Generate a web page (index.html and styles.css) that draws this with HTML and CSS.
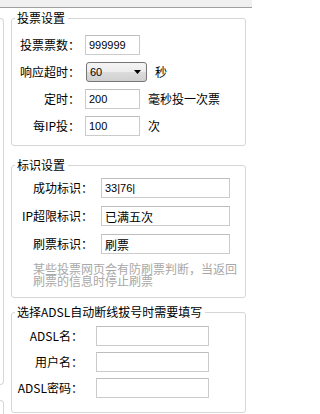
FILE: index.html
```html
<!DOCTYPE html>
<html lang="zh-CN">
<head>
<meta charset="utf-8">
<title>投票设置</title>
<link rel="stylesheet" href="styles.css">
</head>
<body>
<div class="topbar"></div>
<div class="main">
  <div class="side">
    <div class="side-a"></div>
    <div class="side-b"></div>
  </div>
  <div class="groups">
    <fieldset class="group g1">
      <legend>投票设置</legend>
      <div class="form f1">
        <label class="lbl">投票票数：</label>
        <input class="txt" type="text" value="999999">
        <span></span>

        <label class="lbl">响应超时：</label>
        <div class="select"><span class="sel-val">60</span><svg class="arrow" width="7" height="4" viewBox="0 0 7 4"><path d="M0 0H7L3.5 4Z" fill="#000"/></svg></div>
        <span class="unit unit-sel">秒</span>

        <label class="lbl">定时：</label>
        <input class="txt" type="text" value="200">
        <span class="unit">毫秒投一次票</span>

        <label class="lbl">每IP投：</label>
        <input class="txt" type="text" value="100">
        <span class="unit">次</span>
      </div>
    </fieldset>

    <fieldset class="group g2">
      <legend>标识设置</legend>
      <div class="form f2">
        <label class="lbl">成功标识：</label>
        <input class="txt" type="text" value="33|76|">
        <label class="lbl">IP超限标识：</label>
        <input class="txt cjk" type="text" value="已满五次">
        <label class="lbl">刷票标识：</label>
        <input class="txt cjk" type="text" value="刷票">
      </div>
      <p class="hint">某些投票网页会有防刷票判断，当返回刷票的信息时停止刷票</p>
    </fieldset>

    <fieldset class="group g3">
      <legend>选择ADSL自动断线拔号时需要填写</legend>
      <div class="form f3">
        <label class="lbl">ADSL名：</label>
        <input class="txt" type="text" value="">
        <label class="lbl">用户名：</label>
        <input class="txt" type="text" value="">
        <label class="lbl">ADSL密码：</label>
        <input class="txt" type="text" value="">
      </div>
    </fieldset>
  </div>
</div>
</body>
</html>
```

FILE: styles.css
```css
html, body {
  margin: 0;
  padding: 0;
  background: #ffffff;
  overflow: hidden;
}
body {
  width: 252px;
  height: 414px;
  font-family: "Noto Sans CJK SC", "Liberation Sans", sans-serif;
  font-size: 12px;
  color: #000;
}
.topbar {
  height: 7px;
  background: #f0f0f0;
  border-bottom: 1px solid #a0a0a0;
}
.main {
  display: flex;
  height: 406px;
  overflow: hidden;
}
.side {
  width: 4px;
  flex: none;
  display: flex;
  flex-direction: column;
}
.side-a {
  box-sizing: border-box;
  margin-top: 10px;
  height: 367px;
  border: 1px solid #d6d6d6;
  border-left: none;
  border-radius: 0 4px 4px 0;
}
.side-b {
  box-sizing: border-box;
  margin-top: 15px;
  height: 14px;
  border: 1px solid #d6d6d6;
  border-left: none;
  border-bottom: none;
  border-radius: 0 4px 0 0;
}
.groups {
  flex: 1;
  margin: 0 6px 0 7px;
  display: flex;
  flex-direction: column;
}
.group {
  margin: 0;
  padding: 0;
  min-width: 0;
  border: 1px solid #d6d6d6;
  border-radius: 3px;
}
.group legend {
  font-size: 12px;
  line-height: 14px;
  height: 14px;
  padding: 0 3px 0 2px;
  margin-left: 3px;
  white-space: nowrap;
}
.g1 {
  margin-top: 3px;
  padding: 10px 0 9px;
}
.g2 {
  margin-top: 12px;
  padding: 6px 0 10px;
}
.g3 {
  margin-top: 7px;
  padding: 7px 0 14px;
}
.form {
  display: grid;
  align-items: center;
}
.f1 {
  grid-template-columns: 68px 55px auto;
  column-gap: 5px;
  row-gap: 7px;
}
.f2 {
  grid-template-columns: 81px 129px;
  column-gap: 8px;
  row-gap: 8px;
}
.f3 {
  grid-template-columns: 71px 113px;
  column-gap: 13px;
  row-gap: 6px;
}
.lbl {
  text-align: right;
  white-space: nowrap;
  line-height: 14px;
}
.txt {
  box-sizing: border-box;
  width: 100%;
  height: 20px;
  margin: 0;
  padding: 0 0 0 3px;
  border: 1px solid #cbcbcb;
  border-top-color: #bdbdbd;
  background: #fff;
  font-family: "Liberation Sans", Arial, sans-serif;
  font-size: 11px;
  color: #000;
  outline: none;
}
.txt.cjk {
  font-family: "Noto Sans CJK SC", sans-serif;
  font-size: 12px;
}
.select {
  box-sizing: border-box;
  width: 61px;
  height: 20px;
  margin-left: 1px;
  border: 1px solid #767676;
  border-radius: 3px;
  background: linear-gradient(#f4f4f4, #ececec 50%, #dcdcdc 50%, #d0d0d0);
  display: flex;
  align-items: center;
  justify-content: space-between;
  padding: 0 5px 0 3px;
  font-family: "Liberation Sans", Arial, sans-serif;
  font-size: 11px;
}
.arrow {
  display: block;
}
.unit {
  margin-left: 3px;
  white-space: nowrap;
  line-height: 14px;
}
.unit-sel {
  margin-left: 10px;
}
.hint {
  width: 210px;
  margin: 9px 0 0 21px;
  font-size: 12px;
  line-height: 12px;
  color: #a8a8a8;
}
```
